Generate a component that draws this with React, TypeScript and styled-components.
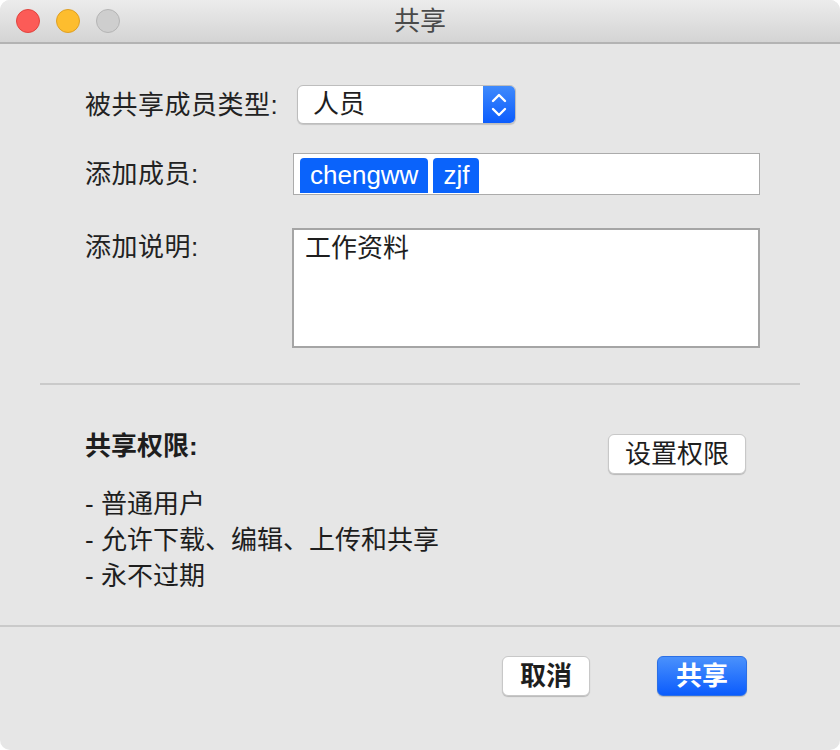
import * as React from 'react';
import styled, { createGlobalStyle } from 'styled-components';

const GlobalStyle = createGlobalStyle`
    body {
        margin: 0;
        background: #ffffff;
        font-family: "Liberation Sans", "Noto Sans CJK SC", sans-serif;
    }
`;

const App = () => {
    return (
        <>
            <GlobalStyle />
            <StyledWindow>
                <StyledTitleBar>
                    <StyledLights>
                        <StyledLight $color="#fc5b57" $border="#e0443e" />
                        <StyledLight $color="#fdbd2e" $border="#de9f24" />
                        <StyledLight $color="#cecece" $border="#b4b4b4" />
                    </StyledLights>
                    <StyledTitle>共享</StyledTitle>
                </StyledTitleBar>

                <StyledForm>
                    <StyledLabel>被共享成员类型:</StyledLabel>
                    <StyledSelect>
                        <StyledSelectText>人员</StyledSelectText>
                        <StyledStepper>
                            <svg width="18" height="30" viewBox="0 0 18 30" fill="none">
                                <path d="M3 11 L9 5 L15 11" stroke="#fff" strokeWidth="2.4" strokeLinecap="round" strokeLinejoin="round" />
                                <path d="M3 19 L9 25 L15 19" stroke="#fff" strokeWidth="2.4" strokeLinecap="round" strokeLinejoin="round" />
                            </svg>
                        </StyledStepper>
                    </StyledSelect>

                    <StyledLabel>添加成员:</StyledLabel>
                    <StyledTokenField>
                        <StyledToken>chengww</StyledToken>
                        <StyledToken>zjf</StyledToken>
                    </StyledTokenField>

                    <StyledLabel $top>添加说明:</StyledLabel>
                    <StyledTextArea>工作资料</StyledTextArea>
                </StyledForm>

                <StyledDivider />

                <StyledPermissions>
                    <StyledPermHeader>
                        <StyledPermTitle>共享权限:</StyledPermTitle>
                        <StyledButton $offset={7}>设置权限</StyledButton>
                    </StyledPermHeader>
                    <StyledList>
                        <li>- 普通用户</li>
                        <li>- 允许下载、编辑、上传和共享</li>
                        <li>- 永不过期</li>
                    </StyledList>
                </StyledPermissions>

                <StyledFooter>
                    <StyledButton $bold $width={88}>取消</StyledButton>
                    <StyledButton $bold $primary $width={90}>共享</StyledButton>
                </StyledFooter>
            </StyledWindow>
        </>
    );
};

export default App;

const StyledWindow = styled.div`
    width: 840px;
    height: 750px;
    background: #e6e6e6;
    border-radius: 10px;
    overflow: hidden;
    display: flex;
    flex-direction: column;
    color: #1e1e1e;
    font-size: 26px;
`;

const StyledTitleBar = styled.div`
    position: relative;
    height: 42px;
    flex-shrink: 0;
    background: linear-gradient(#ececec, #d4d4d4);
    border-bottom: 2px solid #b3b3b3;
    display: flex;
    align-items: center;
    justify-content: center;
`;

const StyledLights = styled.div`
    position: absolute;
    left: 16px;
    top: 9px;
    display: flex;
    gap: 16px;
`;

const StyledLight = styled.span<{ $color: string; $border: string }>`
    width: 22px;
    height: 22px;
    border-radius: 50%;
    background: ${(p) => p.$color};
    border: 1px solid ${(p) => p.$border};
`;

const StyledTitle = styled.div`
    color: #4a4a4a;
    font-size: 26px;
    line-height: 42px;
`;

const StyledForm = styled.div`
    display: grid;
    grid-template-columns: 208px 1fr;
    row-gap: 29px;
    padding: 41px 80px 0 85px;
    align-items: center;
`;

const StyledLabel = styled.div<{ $top?: boolean }>`
    line-height: 38px;
    white-space: nowrap;
    letter-spacing: 0.5px;
    align-self: ${(p) => (p.$top ? 'start' : 'center')};
    margin-top: ${(p) => (p.$top ? '4px' : '0')};
    color: #222;
`;

const StyledSelect = styled.div`
    margin-left: 4px;
    width: 219px;
    height: 39px;
    box-sizing: border-box;
    background: #fff;
    border: 1px solid #bdbdbd;
    border-radius: 6px;
    box-shadow: 0 1px 1px rgba(0, 0, 0, 0.15);
    display: flex;
    overflow: hidden;
`;

const StyledSelectText = styled.div`
    flex: 1;
    padding-left: 15px;
    line-height: 37px;
`;

const StyledStepper = styled.div`
    width: 32px;
    background: linear-gradient(#3f8afc, #0b5cfd);
    display: flex;
    align-items: center;
    justify-content: center;
`;

const StyledTokenField = styled.div`
    height: 42px;
    box-sizing: border-box;
    background: #fff;
    border: 1px solid #ababab;
    display: flex;
    align-items: flex-end;
    gap: 5px;
    padding: 4px 6px 1px;
`;

const StyledToken = styled.span`
    height: 35px;
    line-height: 35px;
    padding: 0 10px;
    background: #0a63fb;
    color: #fff;
    border-radius: 4px 4px 0 0;
`;

const StyledTextArea = styled.div`
    height: 120px;
    margin: 4px 0 0 -1px;
    box-sizing: border-box;
    background: #fff;
    border: 2px solid #a5a5a5;
    padding: 1px 11px;
    line-height: 34px;
    align-self: start;
`;

const StyledDivider = styled.div`
    height: 2px;
    background: #cacaca;
    margin: 35px 40px 0;
`;

const StyledPermissions = styled.div`
    padding: 42px 94px 0 85px;
`;

const StyledPermHeader = styled.div`
    display: flex;
    justify-content: space-between;
    align-items: flex-start;
`;

const StyledPermTitle = styled.div`
    font-weight: bold;
    line-height: 38px;
`;

const StyledButton = styled.button<{ $primary?: boolean; $bold?: boolean; $width?: number; $offset?: number }>`
    font-family: inherit;
    font-size: 26px;
    font-weight: ${(p) => (p.$bold ? 'bold' : 'normal')};
    height: 40px;
    width: ${(p) => (p.$width ? `${p.$width}px` : 'auto')};
    margin-top: ${(p) => p.$offset ?? 0}px;
    padding: ${(p) => (p.$width ? '0' : '0 16px')};
    border-radius: 6px;
    line-height: 38px;
    color: ${(p) => (p.$primary ? '#fff' : '#1e1e1e')};
    background: ${(p) => (p.$primary ? 'linear-gradient(#4a91fc, #0b5cfd)' : '#fff')};
    border: 1px solid ${(p) => (p.$primary ? '#2b6fe6' : '#c8c8c8')};
    box-shadow: 0 1px 1px rgba(0, 0, 0, 0.2);
`;

const StyledList = styled.ul`
    list-style: none;
    margin: 12px 0 0;
    padding: 0;
    line-height: 36px;
`;

const StyledFooter = styled.div`
    margin-top: 31px;
    border-top: 2px solid #cacaca;
    padding: 29px 93px 0 0;
    display: flex;
    justify-content: flex-end;
    gap: 67px;
`;
